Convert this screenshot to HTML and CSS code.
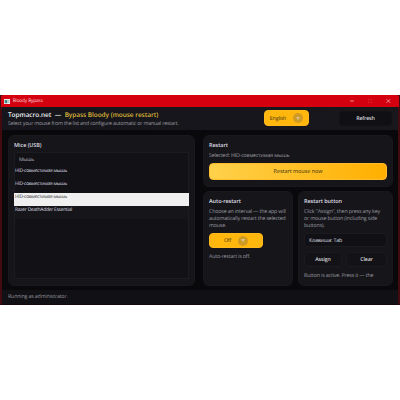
FILE: index.html
```html
<!DOCTYPE html>
<html lang="en">
<head>
<meta charset="utf-8">
<title>Bloody Bypass</title>
<link rel="stylesheet" href="styles.css">
</head>
<body>
<div class="window">
  <div class="titlebar">
    <svg class="app-icon" viewBox="0 0 6 5"><rect width="6" height="5" fill="#e9eeee"/><rect x=".7" y="1" width="2.6" height="3.2" fill="#42857d"/><rect x="4" y="1" width="1.2" height="3" fill="#b8c4c4"/></svg>
    <span class="app-name">Bloody Bypass</span>
    <svg class="controls" viewBox="0 0 42 6" fill="none"><path d="M1 3H5" stroke="#f3a7ad" stroke-width=".8"/><rect x="19.4" y="1.2" width="3.4" height="3.6" stroke="#e02c38" stroke-width=".4"/><path d="M37.6 1.2L41.2 4.8M41.2 1.2L37.6 4.8" stroke="#f7c3c7" stroke-width=".7"/></svg>
  </div>
  <header class="header">
    <div class="heading">
      <h1><span>Topmacro.net</span><span class="dash">—</span><span class="gold">Bypass Bloody (mouse restart)</span></h1>
      <p class="muted intro">Select your mouse from the list and configure automatic or manual restart.</p>
    </div>
    <div class="select language"><span>English</span><i class="knob"></i></div>
    <div class="button refresh">Refresh</div>
  </header>
  <main class="content">
    <section class="card mice">
      <h2>Mice (USB)</h2>
      <div class="list">
        <div class="list-head">Мышь</div>
        <div class="row">HID-совместимая мышь</div>
        <div class="row">HID-совместимая мышь</div>
        <div class="row selected">HID-совместимая мышь</div>
        <div class="row razer">Razer DeathAdder Essential</div>
      </div>
    </section>
    <div class="side">
      <section class="card restart">
        <h2>Restart</h2>
        <p class="muted">Selected: HID-совместимая мышь</p>
        <div class="primary">Restart mouse now</div>
      </section>
      <div class="pair">
        <section class="card auto">
          <h2>Auto-restart</h2>
          <p class="muted">Choose an interval — the app will<br>automatically restart the selected<br>mouse.</p>
          <div class="select interval"><span>Off</span><i class="knob"></i></div>
          <p class="muted">Auto-restart is off.</p>
        </section>
        <section class="card key">
          <h2>Restart button</h2>
          <p class="muted">Click "Assign", then press any key<br>or mouse button (including side<br>buttons).</p>
          <div class="field">Клавиша: Tab</div>
          <div class="actions"><div class="button">Assign</div><div class="button">Clear</div></div>
          <p class="muted">Button is active. Press it — the</p>
        </section>
      </div>
    </div>
  </main>
  <footer class="footer">Running as administrator.</footer>
</div>
</body>
</html>
```
FILE: styles.css
```css
* { box-sizing: border-box; }
body { margin: 0; height: 400px; padding-top: 95px; background: #fff; overflow: hidden; font-family: "Open Sans", "Noto Sans", sans-serif; font-size: 5.3px; line-height: 7px; letter-spacing: -.17px; color: #dcdce0; white-space: nowrap; text-rendering: geometricPrecision; }
h1, h2, p { margin: 0; }
.window { width: 400px; height: 210px; display: flex; flex-direction: column; background: #09090b; border-left: 2px solid #430a10; border-right: 2px solid #430a10; border-bottom: 1px solid #16060e; }
.titlebar { height: 12px; margin: 0 -1px; padding: 0 21px 0 3px; display: flex; align-items: center; background: #d4000f; border-radius: 2px 2px 0 0; }
.app-icon { width: 6px; height: 5px; }
.app-name { margin-left: 2.7px; font-size: 4.8px; color: #fbd5d7; }
.controls { width: 42px; height: 6px; margin-left: auto; margin-right: -13px; }
.header { height: 23px; padding: 0 6px; display: flex; align-items: center; background: linear-gradient(90deg, #15151b, #17171c); }
.heading { flex: 1; }
h1 { display: flex; font-size: 6.5px; line-height: 9px; font-weight: 600; letter-spacing: -.06px; color: #eeeef1; }
.dash { margin: 0 3.5px; }
.gold { color: #dfb638; }
.muted { color: #9b9ba1; }
.intro { line-height: 8px; letter-spacing: -.19px; }
.select { display: flex; align-items: center; justify-content: center; gap: 7px; background: #ffb60d; color: #443514; border: 1px solid #ffb91c; border-radius: 4px; }
.knob { width: 10px; height: 10px; border-radius: 50%; background: #d19a22; display: grid; place-items: center; }
.knob::after { content: ""; border: 2px solid transparent; border-top: 3px solid #d8c497; border-bottom: 0; }
.language { width: 45px; height: 16px; margin: -1px 30px 0 0; }
.button { display: flex; align-items: center; justify-content: center; font-weight: 600; color: #d3d3d8; background: #121217; border: 1px solid #1a1a1f; border-radius: 4px; }
.refresh { width: 53px; height: 15px; background: #101014; border-color: #111116; }
.content { height: 160px; padding: 5px 5px 4px 6px; display: flex; gap: 8px; }
.card { background: #15151a; border: 1px solid #18181d; border-radius: 6px; padding: 5px; }
h2 { font-size: 5.5px; line-height: 9px; font-weight: 600; letter-spacing: -.06px; color: #dedee2; }
.mice { width: 187px; }
.list { margin-top: 2px; height: 127px; border: 1px solid #1b1b20; background: #111116; }
.list-head { height: 14px; padding: 4px 0 0 4px; font-size: 5px; color: #babac0; }
.row { height: 13px; font-size: 4.9px; line-height: 8px; letter-spacing: -.26px; color: #dfdfe3; }
.row.selected { background: #f0f0f0; color: #303035; margin: 0 -1px; padding-left: 1px; }
.razer { line-height: 8px; letter-spacing: -.23px; background: #15151a; }
.side { width: 190px; display: flex; flex-direction: column; gap: 4px; }
.restart { height: 52px; }
.restart .muted { margin-top: 2px; }
.primary { height: 17px; margin-top: 4px; display: flex; align-items: center; justify-content: center; border: 1px solid #ffbd2c; border-radius: 4px; background: linear-gradient(90deg, #ffd14b, #ffaf00); color: #403013; font-size: 5.5px; letter-spacing: -.04px; }
.pair { display: flex; gap: 5px; height: 95px; }
.pair h2 { margin-bottom: 2px; }
.auto { width: 90px; }
.key { width: 95px; }
.interval { width: 54px; height: 15px; margin: 4px 0 5px; }
.field { height: 14px; width: 83px; margin: 4px 0 5px; padding-left: 4px; border: 1px solid #1a1a1f; border-radius: 3px; background: #101015; display: flex; align-items: center; letter-spacing: -.17px; }
.actions { display: grid; grid-template-columns: 38px 41px; gap: 4px; margin-bottom: 5px; }
.actions .button { height: 15px; }
.footer { height: 14px; margin: 0; padding: 3px 6px; background: #101015; color: #95959c; }
```
